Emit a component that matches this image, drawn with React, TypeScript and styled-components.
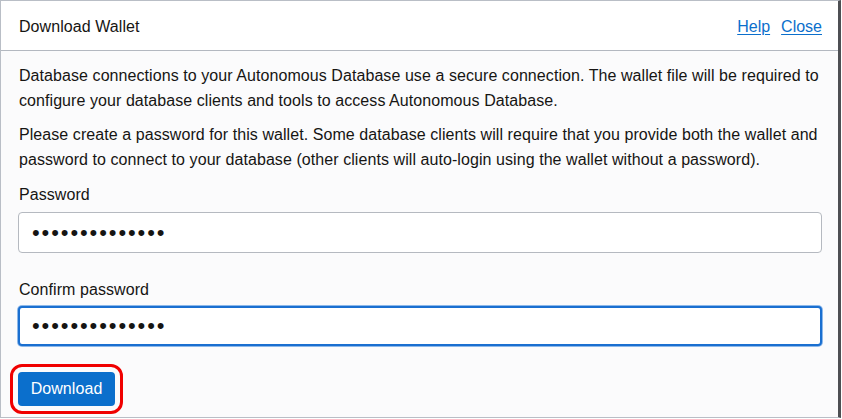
import React from "react";
import styled, { createGlobalStyle } from "styled-components";

const Global = createGlobalStyle`
  html, body { margin: 0; padding: 0; background: #ffffff; }
  body { font-family: "Liberation Sans", Arial, sans-serif; color: #161513; }
  * { box-sizing: border-box; }
`;

const Panel = styled.section`
  width: 841px;
  height: 418px;
  border-left: 1px solid #b9bec6;
  border-top: 1px solid #b9bec6;
  border-bottom: 1px solid #b9bec6;
  border-right: 3px solid #4d4f53;
  background: #fbfbfc;
  display: flex;
  flex-direction: column;
`;

const Header = styled.header`
  height: 50px;
  flex: none;
  display: flex;
  align-items: center;
  justify-content: space-between;
  padding: 3px 16px 0 18px;
  background: #ffffff;
  border-bottom: 1px solid #b3b8c0;
`;

const Title = styled.h1`
  margin: 0;
  font-size: 16px;
  font-weight: 400;
  letter-spacing: 0.07px;
  color: #161513;
`;

const Links = styled.nav`
  display: flex;
  gap: 11px;
`;

const Link = styled.a`
  font-size: 16px;
  color: #0b6fcc;
  text-decoration: underline;
  text-underline-offset: 2px;
  cursor: pointer;
`;

const Body = styled.div`
  padding: 12px 16px 0 17px;
  display: flex;
  flex-direction: column;
`;

const Para = styled.p`
  margin: 0 0 9px 1px;
  font-size: 16px;
  line-height: 25px;
  letter-spacing: 0.07px;
  color: #161513;
`;

const Field = styled.div<{ $gap: number }>`
  display: flex;
  flex-direction: column;
  margin-bottom: ${(p) => p.$gap}px;
`;

const Label = styled.label<{ $below: number }>`
  font-size: 16px;
  line-height: 24px;
  letter-spacing: 0.07px;
  margin: 2px 0 ${(p) => p.$below}px 1px;
  color: #161513;
`;

const Input = styled.input<{ $focused?: boolean }>`
  height: ${(p) => (p.$focused ? 40 : 41)}px;
  width: 100%;
  border-radius: 4px;
  background: #ffffff;
  padding: 0 ${(p) => (p.$focused ? 12 : 13)}px;
  font-family: "Liberation Sans", Arial, sans-serif;
  font-size: 22px;
  letter-spacing: 1.9px;
  color: #161513;
  outline: none;
  border: ${(p) => (p.$focused ? "2px solid #1a6fd0" : "1px solid #b5b9c0")};
  box-shadow: ${(p) => (p.$focused ? "0 0 0 1px #8cb8ea" : "none")};
`;

const Button = styled.button`
  align-self: flex-start;
  width: 97px;
  height: 34px;
  margin-top: 1px;
  border: none;
  border-radius: 4px;
  background: #0b6fcc;
  color: #ffffff;
  font-family: "Liberation Sans", Arial, sans-serif;
  font-size: 16px;
  letter-spacing: 0.07px;
  outline: 3px solid #f00000;
  outline-offset: 5px;
  cursor: pointer;
`;

export default function App() {
  return (
    <>
      <Global />
      <Panel>
        <Header>
          <Title>Download Wallet</Title>
          <Links>
            <Link>Help</Link>
            <Link>Close</Link>
          </Links>
        </Header>
        <Body>
          <Para>
            Database connections to your Autonomous Database use a secure connection. The wallet file will be required to
            configure your database clients and tools to access Autonomous Database.
          </Para>
          <Para>
            Please create a password for this wallet. Some database clients will require that you provide both the wallet and
            password to connect to your database (other clients will auto-login using the wallet without a password).
          </Para>
          <Field $gap={23}>
            <Label $below={5}>Password</Label>
            <Input type="password" defaultValue="abcdefghijklmn" readOnly />
          </Field>
          <Field $gap={25}>
            <Label $below={4}>Confirm password</Label>
            <Input type="password" defaultValue="abcdefghijklmn" readOnly $focused />
          </Field>
          <Button>Download</Button>
        </Body>
      </Panel>
    </>
  );
}
